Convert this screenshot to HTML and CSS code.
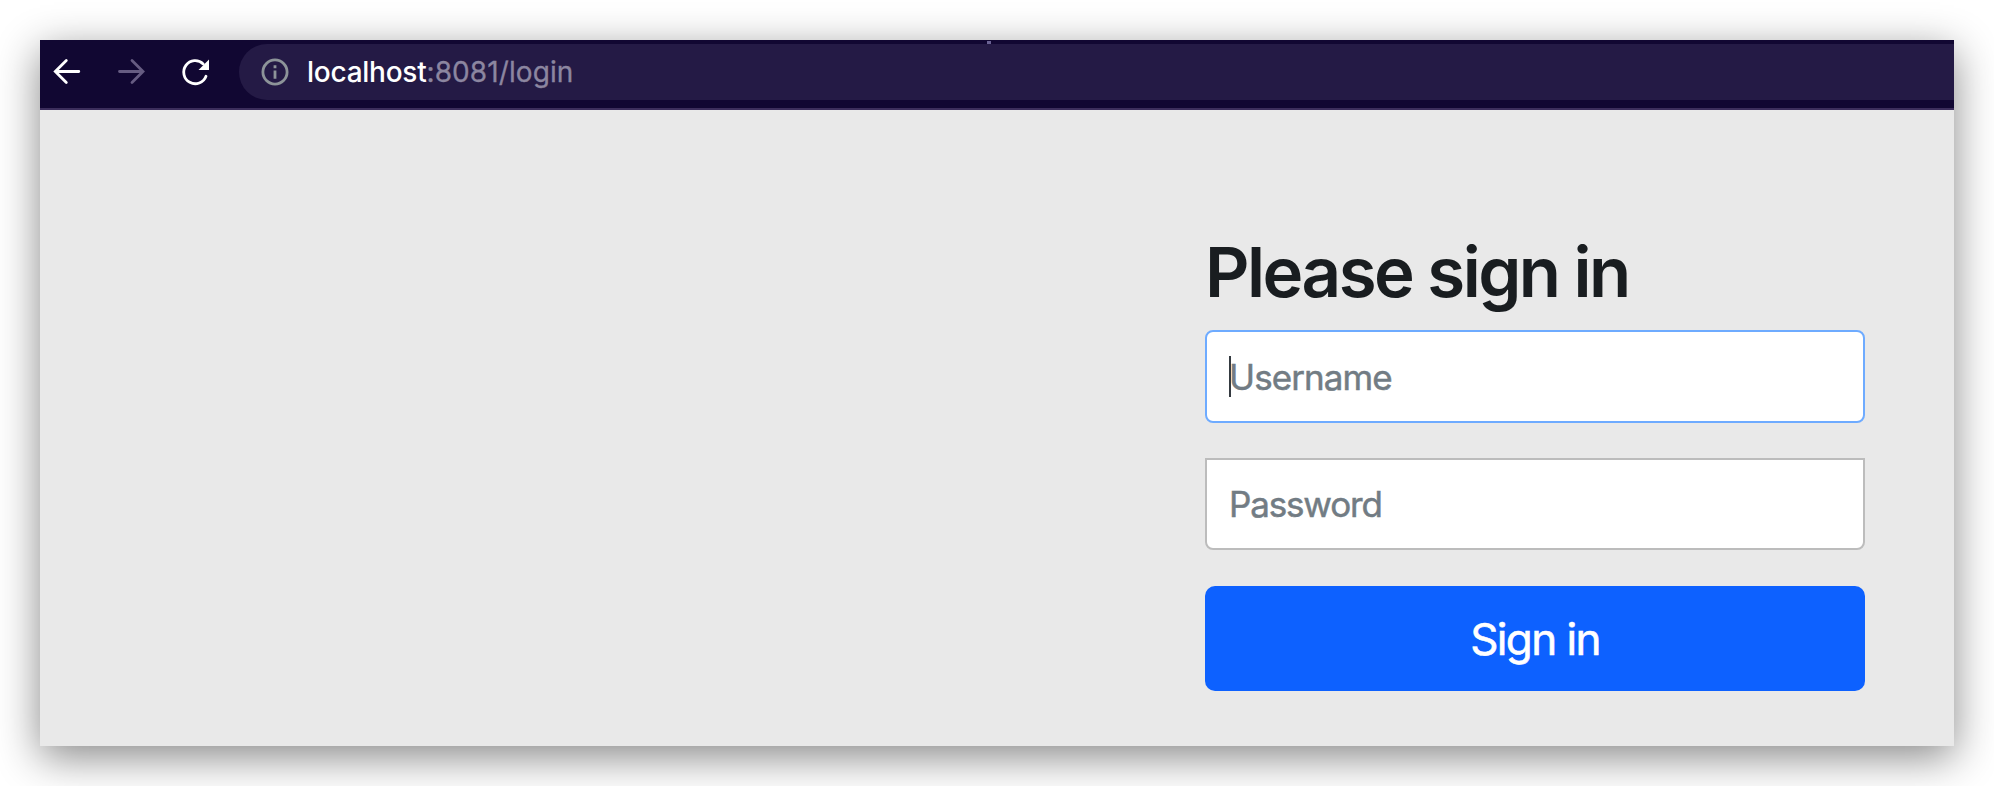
FILE: index.html
```html
<!DOCTYPE html>
<html lang="en">
<head>
<meta charset="utf-8">
<title>Please sign in</title>
<link rel="stylesheet" href="styles.css">
</head>
<body>
<div class="window">
  <header class="toolbar">
    <span class="speck"></span>
    <nav class="nav">
      <svg class="icon" viewBox="0 0 32 32"><path d="M26.800 15.500H3.500M14.300 4.500L3.300 15.500L14.300 26.500" /></svg>
      <svg class="icon dim" viewBox="0 0 32 32"><path d="M3.500 15.500H26.700M16 4.500L27 15.500L16 26.500" /></svg>
      <svg class="icon" viewBox="0 0 32 32"><path d="M26 20.200A11.500 11.500 0 1 1 23.200 7.900" /><path class="solid" d="M29 3.500V14H18.500Z" /></svg>
    </nav>
    <div class="address">
      <svg class="info" viewBox="0 0 28 28"><circle cx="14" cy="14" r="12.100" /><path d="M14 12.400V20.700M14 7.300V10.300" /></svg>
      <div class="url"><span class="host">localhost</span><span class="path">:8081/login</span></div>
    </div>
  </header>
  <main class="page">
    <form class="form">
      <h1 class="title">Please sign in</h1>
      <div class="field">
        <input class="input focused" type="text" placeholder="Username">
        <span class="caret"></span>
      </div>
      <input class="input password" type="password" placeholder="Password">
      <button class="submit" type="button">Sign in</button>
    </form>
  </main>
</div>
</body>
</html>
```

FILE: styles.css
```css
* { box-sizing: border-box; }
body {
  margin: 0;
  padding: 40px;
  height: 786px;
  overflow: hidden;
  background: #fff;
  font-family: Inter, "Liberation Sans", sans-serif;
}
.window {
  display: flex;
  flex-direction: column;
  height: 706px;
  background: #e9e9e9;
  box-shadow: 0 11px 40px rgba(0, 0, 0, .47);
}
.toolbar {
  position: relative;
  display: flex;
  align-items: flex-start;
  height: 70px;
  padding-top: 4px;
  background: #110732;
  border-bottom: 2px solid #3c2e5c;
}
.speck {
  position: absolute;
  left: 947px;
  top: 1px;
  width: 4px;
  height: 3px;
  background: #6a6293;
}
.nav {
  display: flex;
  gap: 32px;
  width: 199px;
  padding: 12px 0 0 12px;
}
.icon {
  width: 32px;
  height: 32px;
  fill: none;
  stroke: #fff;
  stroke-width: 2.800;
  stroke-linecap: round;
}
.icon.dim { stroke: #665c82; }
.icon .solid { fill: #fff; stroke: none; }
.address {
  flex: 1;
  display: flex;
  align-items: center;
  height: 56px;
  padding-left: 22px;
  gap: 18px;
  background: #241a45;
  border-radius: 28px 0 0 28px;
}
.info {
  width: 28px;
  height: 28px;
  fill: none;
  stroke: #8d9499;
  stroke-width: 2.800;
}
.url {
  font-size: 28px;
  line-height: 56px;
  white-space: nowrap;
}
.host { color: #fff; font-weight: 500; letter-spacing: -.25px; }
.path { color: #8c86a0; -webkit-text-stroke: .3px; letter-spacing: .1px; }
.page {
  display: flex;
  flex: 1;
  justify-content: flex-end;
  padding: 120px 89px 0 0;
}
.form {
  display: flex;
  flex-direction: column;
  width: 660px;
}
.title {
  margin: 0 0 16px;
  color: #191d20;
  font-size: 69px;
  font-weight: 600;
  line-height: 84px;
  letter-spacing: -2.500px;
}
.field {
  position: relative;
  height: 93px;
  margin-bottom: 35px;
}
.input {
  display: block;
  width: 100%;
  height: 92px;
  padding: 0 22px;
  border: 2px solid #bcbcbc;
  border-radius: 8px;
  outline: 0;
  background: #fff;
  font: 400 35px/52px Inter, "Liberation Sans", sans-serif;
  letter-spacing: -.9px;
}
.input::placeholder { color: #727c84; opacity: 1; -webkit-text-stroke: .5px; }
.focused { height: 93px; border-color: #6eabff; }
.password { border-radius: 0 0 8px 8px; letter-spacing: -1.150px; }
.caret {
  position: absolute;
  left: 24px;
  top: 26px;
  width: 2px;
  height: 41px;
  background: #343a40;
}
.submit {
  height: 105px;
  margin-top: 36px;
  padding: 0;
  border: 0;
  border-radius: 10px;
  background: #0d61ff;
  color: #fff;
  font: 400 44px/60px Inter, "Liberation Sans", sans-serif;
  letter-spacing: -1.600px;
  -webkit-text-stroke: .6px;
}
```
